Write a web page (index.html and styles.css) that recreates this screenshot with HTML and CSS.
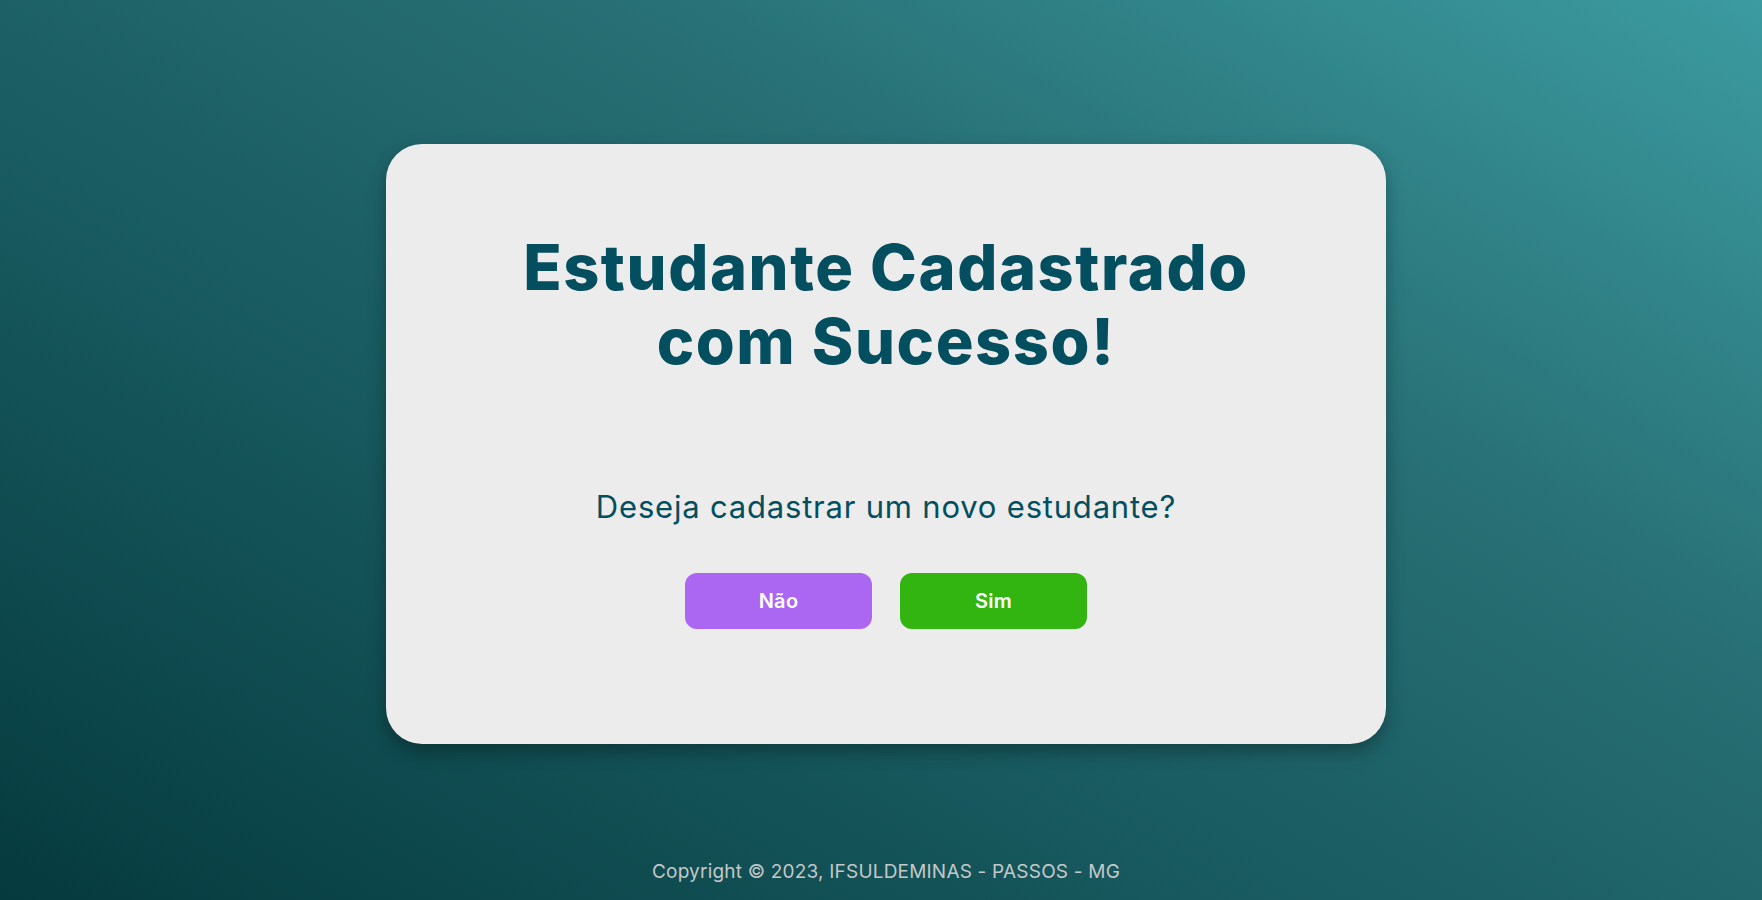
FILE: index.html
```html
<!DOCTYPE html>
<html lang="pt-BR">
<head>
<meta charset="utf-8">
<title>Estudante Cadastrado</title>
<link rel="stylesheet" href="styles.css">
</head>
<body>
<main class="main">
  <section class="card">
    <h1 class="title">Estudante Cadastrado<br>com Sucesso!</h1>
    <p class="question">Deseja cadastrar um novo estudante?</p>
    <div class="actions">
      <button class="btn btn-no" type="button">Não</button>
      <button class="btn btn-yes" type="button">Sim</button>
    </div>
  </section>
</main>
<footer class="footer">Copyright © 2023, IFSULDEMINAS - PASSOS - MG</footer>
</body>
</html>
```
FILE: styles.css
```css
html, body {
  margin: 0;
  padding: 0;
  height: 100%;
}
body {
  font-family: Inter, "Noto Sans", sans-serif;
  background: linear-gradient(30deg, #053a3e 0%, #16585d 35%, #276f74 65%, #3b9ba0 100%);
  display: flex;
  flex-direction: column;
  min-height: 100vh;
  box-sizing: border-box;
  padding-left: 10px;
}
.main {
  display: flex;
  justify-content: center;
  padding-top: 144px;
}
.card {
  width: 1000px;
  height: 600px;
  box-sizing: border-box;
  background: #ececec;
  border-radius: 36px;
  box-shadow: 0 8px 18px rgba(0, 0, 0, 0.3);
  display: flex;
  flex-direction: column;
  align-items: center;
  padding-top: 86px;
}
.title {
  margin: 0;
  font-size: 63px;
  font-weight: 800;
  line-height: 74px;
  color: #034f60;
  text-align: center;
  letter-spacing: 1.6px;
}
.question {
  margin: 109px 0 0;
  font-size: 31px;
  line-height: 40px;
  letter-spacing: 0.8px;
  color: #034f60;
}
.actions {
  display: flex;
  gap: 28px;
  margin-top: 46px;
}
.btn {
  width: 187px;
  height: 56px;
  border: none;
  border-radius: 12px;
  color: #ffffff;
  font-family: Inter, "Noto Sans", sans-serif;
  font-size: 20px;
  font-weight: 600;
  letter-spacing: 0.3px;
}
.btn-no { background: #ab66f2; }
.btn-yes { background: #32b510; }
.footer {
  margin-top: auto;
  text-align: center;
  color: #c4c8c8;
  font-size: 19px;
  line-height: 28px;
  letter-spacing: 0.2px;
  padding-bottom: 14px;
}
```
